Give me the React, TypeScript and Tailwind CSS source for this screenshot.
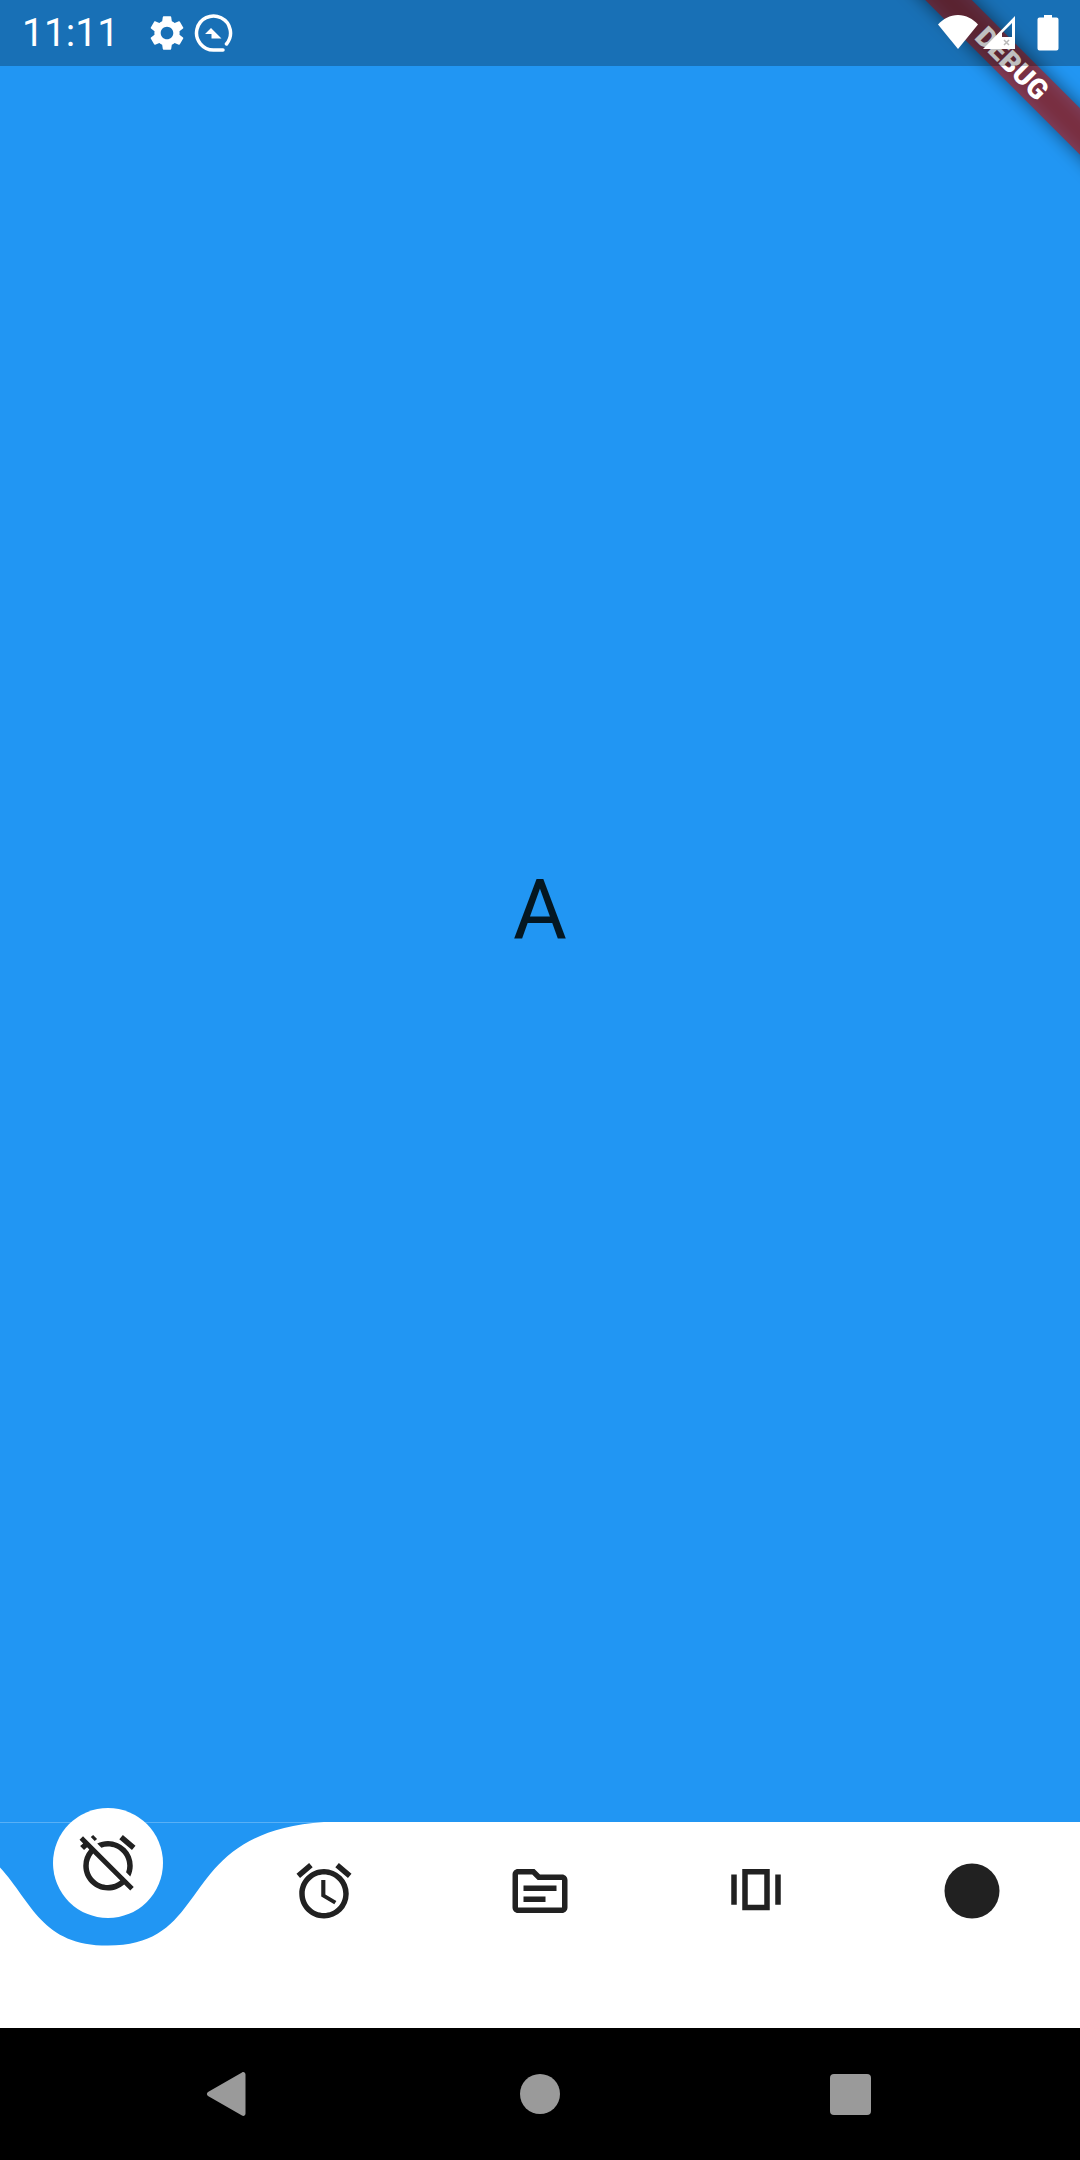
import { MdAlarm, MdAlarmOff, MdOutlineSource, MdSettings } from 'react-icons/md';

const WIDTH = 1080;
const BAR_HEIGHT = 206;

// same curve as the curved_navigation_bar painter, first tab selected
function curvePath() {
  const s = 0.2;
  const loc = 0;
  const w = WIDTH;
  const h = BAR_HEIGHT;
  return [
    `M${(loc - 0.1) * w} 0`,
    `C${(loc + s * 0.2) * w} ${h * 0.05} ${loc * w} ${h * 0.6} ${(loc + s * 0.5) * w} ${h * 0.6}`,
    `C${(loc + s) * w} ${h * 0.6} ${(loc + s - s * 0.2) * w} ${h * 0.05} ${(loc + s + 0.1) * w} 0`,
    'Z',
  ].join(' ');
}

function ViewArrayIcon() {
  return (
    <svg viewBox="0 0 24 24" className="h-[66px] w-[66px]" fill="#212121">
      <path d="M3 6h2v11H3z" />
      <path d="M19 6h2v11h-2z" />
      <path fillRule="evenodd" d="M7 4h10v15H7zM9 6v11h6V6z" />
    </svg>
  );
}

function LensIcon() {
  return (
    <svg viewBox="0 0 24 24" className="h-[66px] w-[66px]" fill="#212121">
      <circle cx="12" cy="12" r="10" />
    </svg>
  );
}

function QLogo() {
  return (
    <svg viewBox="0 0 40 40" className="h-10 w-10" fill="none">
      <path
        d="M32.500 31A17 17 0 1 0 20 37H29"
        stroke="white"
        strokeWidth="3.500"
        strokeLinecap="round"
      />
      <path d="M11 21 17 15 27.500 25.500H17.500V21z" fill="white" />
    </svg>
  );
}

function StatusBar() {
  return (
    <div className="absolute inset-x-0 top-0 flex h-[66px] items-center bg-black/25 pl-[22px] text-white">
      <span className="w-[130px] font-['Roboto',sans-serif] text-[39px] leading-none">11:11</span>
      <MdSettings className="ml-[-6px] h-[42px] w-[42px]" />
      <div className="ml-[5.500px]">
        <QLogo />
      </div>
      <div className="ml-auto mr-[21px] flex items-center">
        <svg viewBox="0 0 42 36" className="h-[36px] w-[42px]">
          <path d="M21 34 1 9.500C6 4 13 0 21 0S36 4 41 9.500z" fill="white" />
        </svg>
        <svg viewBox="0 0 36 36" className="ml-[2px] h-[36px] w-[36px]">
          <path d="M34 1v33H2zM31 8 21 18v4h10z" fill="white" fillRule="evenodd" />
          <path d="M23 25l5 5M28 25l-5 5" stroke="#b9b9b9" strokeWidth="1.500" />
        </svg>
        <svg viewBox="0 0 22 36" className="ml-[20px] h-[36px] w-[22px]">
          <path
            d="M7 0h8v2.500h4.500a2 2 0 0 1 2 2V33.500a2 2 0 0 1-2 2H2.500a2 2 0 0 1-2-2V4.500a2 2 0 0 1 2-2H7z"
            fill="white"
          />
        </svg>
      </div>
    </div>
  );
}

function DebugBanner() {
  return (
    <div className="pointer-events-none absolute left-[862px] top-[47px] h-[33px] w-[300px] rotate-45">
      <div className="absolute inset-0 bg-black/50 blur-[9px]" />
      <div className="absolute inset-0 flex items-center justify-center bg-[#b71c1c]/[0.627] font-['Roboto',sans-serif] text-[28px] font-black leading-none text-white">
        DEBUG
      </div>
    </div>
  );
}

function BottomBar() {
  const flatIcons = [
    { key: 'alarm', icon: <MdAlarm className="h-[66px] w-[66px]" /> },
    { key: 'source', icon: <MdOutlineSource className="h-[66px] w-[66px]" /> },
    { key: 'view', icon: <ViewArrayIcon /> },
    { key: 'lens', icon: <LensIcon /> },
  ];

  return (
    <div className="relative h-[206px] shrink-0 bg-white">
      <svg viewBox="0 0 1080 206" className="absolute inset-0 h-[206px] w-[1080px]">
        <path d={curvePath()} fill="#2196f3" />
      </svg>
      <div className="absolute left-0 top-0 h-px w-[324px] bg-white/25" />
      <div className="absolute left-[53px] top-[-14px] flex h-[110px] w-[110px] items-center justify-center rounded-full bg-white text-[#212121]">
        <MdAlarmOff className="h-[66px] w-[66px]" />
      </div>
      <div className="relative grid grid-cols-5 pt-[36px] text-[#212121]">
        <div />
        {flatIcons.map((item) => (
          <div key={item.key} className="flex justify-center">
            {item.icon}
          </div>
        ))}
      </div>
    </div>
  );
}

function SystemNav() {
  return (
    <div className="flex h-[132px] shrink-0 items-center bg-black pl-[206px]">
      <svg viewBox="0 0 40 46" className="h-[46px] w-[40px]">
        <path
          d="M36 1.500c1.500-1 3.500 0 3.500 2v39c0 2-2 3-3.500 2L2 25c-1.500-1-1.500-3 0-4z"
          fill="#9a9a9a"
        />
      </svg>
      <div className="ml-[274px] h-10 w-10 rounded-full bg-[#9a9a9a]" />
      <div className="ml-[270px] h-[41px] w-[41px] rounded-[4px] bg-[#9a9a9a]" />
    </div>
  );
}

export default function App() {
  return (
    <div className="relative flex h-[2160px] w-[1080px] flex-col overflow-hidden">
      <main className="flex flex-1 items-center justify-center bg-[#2196f3]">
        <span className="font-['Roboto',sans-serif] text-[82.5px] leading-none text-[#041722]">A</span>
      </main>
      <BottomBar />
      <SystemNav />
      <DebugBanner />
      <StatusBar />
    </div>
  );
}
